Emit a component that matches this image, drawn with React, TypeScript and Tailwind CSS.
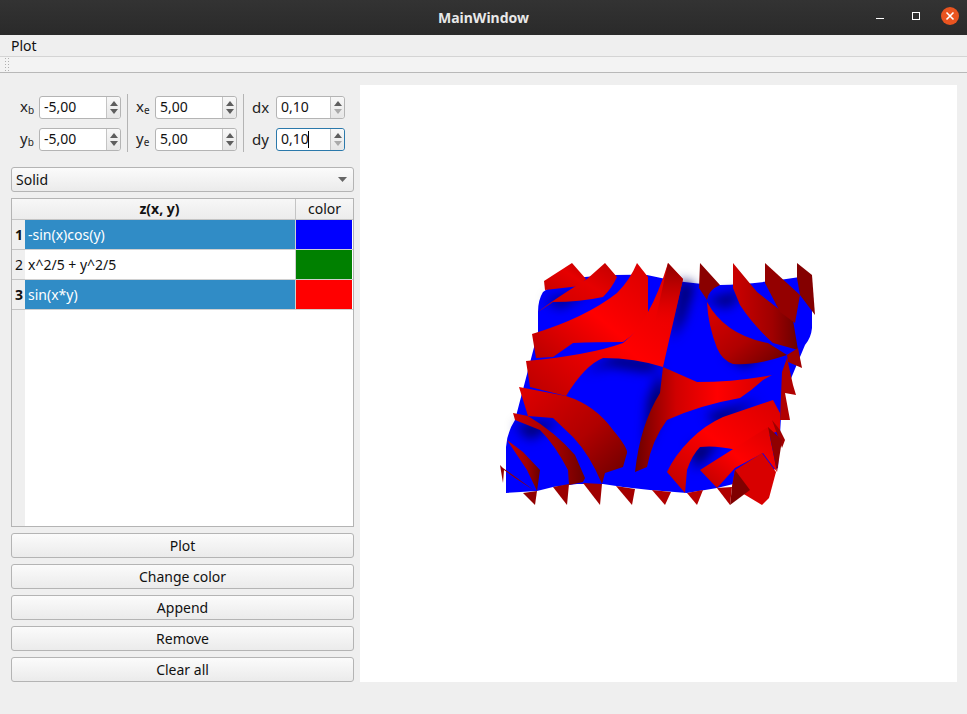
const font = "font-['Noto_Sans','Open_Sans',sans-serif]"

type SpinProps = {
	value: string
	width: string
	focused?: boolean
	downOff?: boolean
}

function Spin({ value, width, focused, downOff }: SpinProps) {
	return (
		<div
			className={`flex h-[23px] ${width} rounded-[3px] border bg-white ${focused ? 'border-[#2b79ab]' : 'border-[#b4b4b4]'}`}
		>
			<div className="flex flex-1 items-center pl-[4px] text-[14px] leading-none text-[#111]">
				{value}
				{focused && <span className="ml-[-1px] h-[17px] w-px bg-black" />}
			</div>
			<div className="flex w-[14px] flex-col items-center justify-center gap-[3px] rounded-r-[3px] border-l border-[#c4c4c4] bg-gradient-to-b from-[#f8f8f8] to-[#e6e6e6]">
				<svg width="8" height="5" viewBox="0 0 8 5">
					<path d="M4 0 8 5H0Z" fill="#5e5e5e" />
				</svg>
				<svg width="8" height="5" viewBox="0 0 8 5">
					<path d="M0 0H8L4 5Z" fill={downOff ? '#aaaaaa' : '#5e5e5e'} />
				</svg>
			</div>
		</div>
	)
}

function Label({ name, sub, width }: { name: string; sub?: string; width: string }) {
	return (
		<div className={`${width} text-[15px] leading-none text-[#222]`}>
			{name}
			{sub && <span className="align-[-2px] text-[10px]">{sub}</span>}
		</div>
	)
}

function Sep() {
	return <div className="h-[58px] w-px bg-[#b4b4b4]" />
}

function Btn({ children }: { children: string }) {
	return (
		<button className="h-[25px] w-full rounded-[3px] border border-[#b4b4b4] bg-gradient-to-b from-[#fbfbfb] to-[#ebebeb] text-[14px] leading-none text-[#111]">
			{children}
		</button>
	)
}

const rows = [
	{ id: '1', text: '-sin(x)cos(y)', color: 'bg-[#0000ff]', selected: true },
	{ id: '2', text: 'x^2/5 + y^2/5', color: 'bg-[#008000]', selected: false },
	{ id: '3', text: 'sin(x*y)', color: 'bg-[#ff0000]', selected: true },
]

function Table() {
	return (
		<div className="flex h-[329px] flex-col border border-[#b4b4b4] bg-white">
			<div className="flex h-[21px] border-b border-[#c4c4c4] bg-gradient-to-b from-[#f7f7f7] to-[#ececec] text-[14px] leading-none text-[#111]">
				<div className="flex w-[284px] items-center justify-center border-r border-[#c4c4c4] pl-[12px] font-bold">
					z(x, y)
				</div>
				<div className="flex flex-1 items-center justify-center">color</div>
			</div>
			<div className="flex flex-1">
				<div className="w-[13px] bg-[#efefef]">
					{rows.map(r => (
						<div
							key={r.id}
							className={`flex h-[30px] items-center justify-center border-b border-[#c4c4c4] pl-[1px] text-[14px] leading-none text-[#111] ${r.selected ? 'font-bold' : ''}`}
						>
							{r.id}
						</div>
					))}
				</div>
				<div className="flex-1">
					{rows.map(r => (
						<div
							key={r.id}
							className="flex h-[30px] border-b border-[#d0d0d0] pr-px text-[14px] leading-none"
						>
							<div
								className={`flex w-[271px] items-center border-r border-[#d0d0d0] pl-[3px] ${r.selected ? 'bg-[#308cc6] text-white' : 'bg-white text-[#111]'}`}
							>
								{r.text}
							</div>
							<div className={`flex-1 ${r.color}`} />
						</div>
					))}
				</div>
			</div>
		</div>
	)
}

function Plot3D() {
	return (
		<svg viewBox="360 85 597 597" className="h-full w-full">
			<defs>
				<linearGradient id="r1" x1="0" y1="1" x2="1" y2="0">
					<stop offset="0" stopColor="#c80000" />
					<stop offset="0.6" stopColor="#e60000" />
					<stop offset="1" stopColor="#c00000" />
				</linearGradient>
				<linearGradient id="r2" x1="0" y1="0" x2="1" y2="1">
					<stop offset="0" stopColor="#e00000" />
					<stop offset="0.55" stopColor="#b00000" />
					<stop offset="1" stopColor="#660000" />
				</linearGradient>
				<linearGradient id="r3" x1="0" y1="0" x2="1" y2="0">
					<stop offset="0" stopColor="#cc0000" />
					<stop offset="0.6" stopColor="#a00000" />
					<stop offset="1" stopColor="#6a0000" />
				</linearGradient>
				<linearGradient id="r4" x1="0" y1="1" x2="1" y2="0">
					<stop offset="0" stopColor="#b80000" />
					<stop offset="0.5" stopColor="#ff0000" />
					<stop offset="1" stopColor="#d80000" />
				</linearGradient>
				<linearGradient id="r5" x1="0" y1="0" x2="0" y2="1">
					<stop offset="0" stopColor="#8a0000" />
					<stop offset="0.5" stopColor="#c80000" stopOpacity="0.7" />
					<stop offset="1" stopColor="#ff0000" stopOpacity="0" />
				</linearGradient>
				<linearGradient id="r6" x1="0" y1="0" x2="1" y2="0">
					<stop offset="0" stopColor="#6a0000" />
					<stop offset="0.3" stopColor="#d00000" />
					<stop offset="0.6" stopColor="#ff0000" />
					<stop offset="1" stopColor="#d00000" />
				</linearGradient>
				<filter id="soft" x="-30%" y="-30%" width="160%" height="160%">
					<feGaussianBlur stdDeviation="6" />
				</filter>
			</defs>

			{/* blue surface */}
			<path
				d="M543 292 L560 280 Q600 274 647 275 Q685 284 720 285 Q760 284 812 275 L812 328 Q811 338 805 345 L782 400 L778 468 L750 480 L717 488 L687 493 L650 490 L623 487 L603 484 L577 484 L553 487 L537 491 L506 493 L506 447 Q507 432 515 420 L538 332 L538 312 Q538 300 543 292Z"
				fill="#0000ff"
			/>
			{/* dark shading on the surface */}
			<g filter="url(#soft)" fill="#00006a">
				<path d="M545 300 L590 292 L560 308Z" />
				<path d="M680 280 L672 340 L684 320 L695 285Z" />
				<path d="M705 300 L745 290 L728 308Z" />
				<path d="M585 372 L615 356 L660 362 L650 372 L610 366Z" />
				<path d="M648 400 L660 372 L668 400 L645 450Z" />
				<path d="M515 425 L560 420 L530 440Z" />
				<path d="M705 415 L760 400 L720 425Z" />
				<path d="M690 445 L720 442 L696 470Z" />
				<path d="M725 355 L770 348 L745 368Z" />
			</g>

			{/* upper row of folds */}
			<path d="M544 281 L572 263 L586 279 L580 286 L545 290Z" fill="url(#r1)" />
			<path d="M538 312 Q553 300 587 279 L605 263 L617 277 Q612 288 603 297 Q580 302 553 302Z" fill="url(#r1)" />
			<path d="M532 334 Q585 318 617 293 Q630 280 637 263 L648 277 L648 315 Q638 332 623 342 Q595 342 573 343 L553 357 L536 358Z" fill="url(#r4)" />
			<path d="M526 361 Q590 355 623 343 Q650 322 668 263 L683 279 L663 367 Q635 358 603 358 Q585 365 566 396 L530 387Z" fill="url(#r4)" />
			<path d="M668 263 L683 279 L671 332 L655 322Z" fill="url(#r5)" />
			<path d="M700 263 L720 285 Q708 290 707 300 L699 288Z" fill="#8a0000" />
			<path d="M707 302 Q725 335 768 343 L787 355 Q755 366 733 364 Q722 360 717 348 Q708 325 707 302Z" fill="url(#r2)" />
			<path d="M733 263 L757 292 L793 320 L798 350 L773 343 Q753 325 740 305 L733 288Z" fill="url(#r3)" />
			<path d="M765 263 L800 295 L795 323 L780 312 L765 283Z" fill="#940000" />
			<path d="M797 263 L812 275 L815 315 L800 295 L797 278Z" fill="#840000" />
			<path d="M787 355 L798 348 L802 368 L788 362Z" fill="#a00000" />
			<path d="M782 372 L787 358 L793 385 L796 395 L785 393 L790 420 L780 420Z" fill="#b00000" />

			{/* centre and lower right sheet */}
			<path d="M663 367 L697 382 Q735 382 772 375 L763 380 Q752 390 740 398 Q700 405 667 420 Q652 440 647 467 L635 472 Q640 425 660 393Z" fill="url(#r6)" />

			{/* lower left folds */}
			<path d="M513 413 L528 416 Q555 432 575 455 L585 478 L583 482 L569 485 L568 470 Q555 445 540 430 L515 420Z" fill="url(#r3)" />
			<path d="M519 387 L566 396 Q595 405 613 430 Q628 448 627 453 L623 467 L605 473 L602 484 Q590 455 573 437 L553 418 L528 416Z" fill="url(#r2)" />
			<path d="M507 440 L523 452 L540 470 L537 491 L527 470Z" fill="url(#r3)" />
			<path d="M500 465 L503 468 L535 491 L515 478 L504 470 L503 483Z" fill="#900000" />

			{/* lower right folds */}
			<path d="M667 472 Q675 455 690 440 Q705 425 723 417 L773 400 L780 413 L780 430 L737 450 Q715 445 700 447 Q692 455 687 470 L685 493 Z" fill="url(#r4)" />
			<path d="M780 430 L785 440 L782 448 L772 420Z" fill="#a00000" />
			<path d="M700 470 L768 427 L777 472 L763 453 L735 468 L717 488Z" fill="url(#r4)" />
			<path d="M768 427 L782 440 L777 472Z" fill="#900000" />
			<path d="M735 470 L762 453 L776 472 L769 498 L762 505 L732 487Z" fill="#d80000" />
			<path d="M735 470 L750 490 L730 505 L732 487Z" fill="#800000" />

			{/* bottom spikes */}
			<path d="M523 493 L537 491 L535 505Z" fill="#900000" />
			<path d="M553 487 L569 484 L567 505Z" fill="#9a0000" />
			<path d="M583 483 L602 484 L600 505Z" fill="#a00000" />
			<path d="M616 486 L635 489 L632 505Z" fill="#a40000" />
			<path d="M652 490 L671 492 L665 505Z" fill="#b00000" />
			<path d="M687 493 L703 490 L697 505Z" fill="#b80000" />
			<path d="M717 488 L732 487 L730 505Z" fill="#b00000" />
		</svg>
	)
}

export default function App() {
	return (
		<div className={`flex h-screen w-full flex-col bg-[#efefef] ${font}`}>
			<div className="relative flex h-[35px] items-center justify-center bg-gradient-to-b from-[#333] to-[#2a2a2a] text-[14px] font-bold text-[#e8e8e8]">
				MainWindow
				<div className="absolute right-[8px] top-[7px] flex items-center">
					<svg width="18" height="18" viewBox="0 0 18 18" className="mr-[14px]">
						<path d="M1 11.5H9" stroke="#fff" />
					</svg>
					<svg width="18" height="18" viewBox="0 0 18 18" className="mr-[16px]">
						<rect x="5.5" y="5.5" width="7" height="7" fill="none" stroke="#fff" />
					</svg>
					<svg width="18" height="18" viewBox="0 0 18 18">
						<circle cx="9" cy="9" r="9" fill="#e95420" />
						<path d="M5.5 5.5 12.5 12.5M12.5 5.5 5.5 12.5" stroke="#fff" strokeWidth="1.6" />
					</svg>
				</div>
			</div>

			<div className="flex h-[21px] items-center pl-[11px] text-[14px] leading-none text-[#111]">Plot</div>

			<div className="flex h-[17px] items-center border-y border-[#d4d4d4] border-b-[#b8b8b8] bg-[#f3f3f3] pl-[5px]">
				<div className="grid grid-cols-2 gap-x-[2px] gap-y-[2px]">
					{Array.from({ length: 10 }).map((_, i) => (
						<span key={i} className="h-px w-px bg-[#b0b0b0]" />
					))}
				</div>
			</div>

			<div className="flex flex-1 gap-[6px] pl-[11px] pt-[12px]">
				<div className="flex w-[343px] flex-col">
					<div className="mt-[9px] flex h-[58px] items-center">
						<div className="flex w-[116px] flex-col gap-[9px] pl-[9px]">
							<div className="flex items-center">
								<Label name="x" sub="b" width="w-[19px]" />
								<Spin value="-5,00" width="w-[82px]" />
							</div>
							<div className="flex items-center">
								<Label name="y" sub="b" width="w-[19px]" />
								<Spin value="-5,00" width="w-[82px]" />
							</div>
						</div>
						<Sep />
						<div className="flex w-[115px] flex-col gap-[9px] pl-[8px]">
							<div className="flex items-center">
								<Label name="x" sub="e" width="w-[19px]" />
								<Spin value="5,00" width="w-[82px]" />
							</div>
							<div className="flex items-center">
								<Label name="y" sub="e" width="w-[19px]" />
								<Spin value="5,00" width="w-[82px]" />
							</div>
						</div>
						<Sep />
						<div className="flex flex-col gap-[9px] pl-[8px]">
							<div className="flex items-center">
								<Label name="dx" width="w-[24px]" />
								<Spin value="0,10" width="w-[69px]" downOff />
							</div>
							<div className="flex items-center">
								<Label name="dy" width="w-[24px]" />
								<Spin value="0,10" width="w-[69px]" focused downOff />
							</div>
						</div>
					</div>

					<div className="mt-[15px] flex h-[25px] items-center justify-between rounded-[3px] border border-[#b4b4b4] bg-gradient-to-b from-[#fbfbfb] to-[#ebebeb] pl-[4px] pr-[6px] text-[14px] leading-none text-[#111]">
						Solid
						<svg width="9" height="5" viewBox="0 0 9 5">
							<path d="M0 0H9L4.5 5Z" fill="#666" />
						</svg>
					</div>

					<div className="mt-[6px]">
						<Table />
					</div>

					<div className="mt-[6px] flex flex-col gap-[6px]">
						<Btn>Plot</Btn>
						<Btn>Change color</Btn>
						<Btn>Append</Btn>
						<Btn>Remove</Btn>
						<Btn>Clear all</Btn>
					</div>
				</div>

				<div className="h-[597px] w-[597px] bg-white">
					<Plot3D />
				</div>
			</div>
		</div>
	)
}
